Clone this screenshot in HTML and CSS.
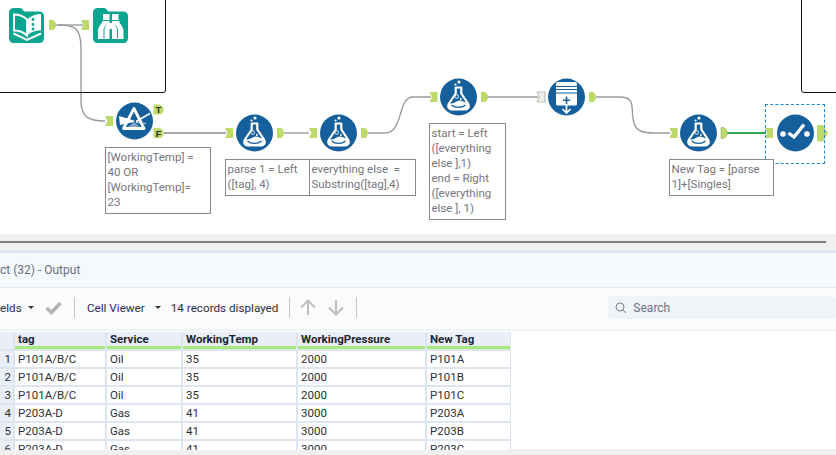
FILE: index.html
```html
<!DOCTYPE html>
<html lang="en">
<head>
<meta charset="utf-8">
<title>Workflow</title>
<link rel="stylesheet" href="styles.css">
</head>
<body>
<section class="canvas">
  <svg class="diagram" width="836" height="234" viewBox="0 0 836 234" xmlns="http://www.w3.org/2000/svg">
    <defs>
      <g id="input"><path d="M-4,-5 H4 V5 H-4 L-1.5,0 Z" fill="#bcd96a"/></g>
      <g id="output"><path d="M-3.5,-5 H0 C2,-5 3.5,-2 3.5,0 C3.5,2 2,5 0,5 H-3.5 Z" fill="#bcd96a"/></g>
      <g id="flask">
        <circle r="18.5" fill="#15609c"/>
        <circle cx="0.5" cy="-15" r="1.6" fill="#fff"/>
        <circle cx="-3" cy="-12.5" r="1.1" fill="#fff"/>
        <path d="M-2.8,-9.5 H2.8 V-3.5 L9.5,6.5 C11.5,10.5 9,12.5 6,12.5 H-6 C-9,12.5 -11.5,10.5 -9.5,6.5 L-2.8,-3.5 Z" fill="none" stroke="#fff" stroke-width="2.2" stroke-linejoin="round"/>
        <path d="M-9.500,6 C-5,8 -2,3.500 1,3.500 C4,3.500 6,6 9.500,5 C11.500,10 9,13 6,13 H-6 C-9,13 -11.500,10 -9.500,6 Z" fill="#fff"/>
        <path d="M-7,8 C-3.500,11.200 3.500,11.200 7,8" fill="none" stroke="#15609c" stroke-width="1.400"/>
        <circle cx="-1.800" cy="-0.500" r="1.800" fill="none" stroke="#fff" stroke-width="0.900"/>
        <circle cx="2.400" cy="2" r="1" fill="#fff"/>
      </g>
    </defs>

    <g fill="none" stroke="#9c9c9c" stroke-width="1.4">
      <path d="M55,25 H83"/>
      <path d="M58,25 C74,25 81,27 81,48 V100 C81,117 88,121 105,121"/>
      <path d="M164,133 H226" stroke="#a8a8a8" stroke-width="2"/>
      <path d="M284,133 H309"/>
      <path d="M368,133 H385 C404,133 397,97 413,97 H431"/>
      <path d="M488,97 H538"/>
      <path d="M596,97 H620 C637,97 630,110 634,123 C636,131 643,133 655,133 H670"/>
      <path d="M727,133 H766" stroke="#36a85c" stroke-width="2.200"/>
    </g>

    <path d="M9,13 Q9,8 14,8 H20 Q22,8 23,10 L24,11.500 H39 Q44,11.500 44,16.500 V38 Q44,43 39,43 H14 Q9,43 9,38 Z" fill="#0aa58f"/>
    <path d="M14,14.500 C19,14.500 24,16.500 27,19.500 V35.500 C24,32.500 19,30.500 14,30.500 Z" fill="none" stroke="#fff" stroke-width="1.800"/>
    <path d="M27,19.500 C30,16.500 35,14 41,14 V30.500 C35,30.500 30,32.500 27,35.500 Z" fill="#fff"/>
    <path d="M13.500,33.500 L27,40 L41,33.500" fill="none" stroke="#fff" stroke-width="2"/>
    <circle cx="33" cy="19.500" r="1.400" fill="#0aa58f"/>
    <circle cx="33" cy="24.500" r="1.400" fill="#0aa58f"/>
    <circle cx="33" cy="29" r="1.400" fill="#0aa58f"/>
    <use href="#output" x="52.500" y="25"/>
    <use href="#input" x="85" y="25"/>
    <path d="M93,13 Q93,8 98,8 H104 Q106,8 107,10 L108,11.500 H123 Q128,11.500 128,16.500 V38 Q128,43 123,43 H98 Q93,43 93,38 Z" fill="#0aa58f"/>
    <path d="M103,14 H109.500 V20 H103 Z M112,14 H118.500 V20 H112 Z" fill="#fff"/>
    <path d="M102.500,21 H109.500 V39 H98 V31 C98,27 101,25 102.500,21 Z M112,21 H119 C120.500,25 123.500,27 123.500,31 V39 H112 Z M109.500,23 H112 V29 H109.500 Z" fill="#fff"/>
    <path d="M104,38.500 V30 C104,28 105,27 106,25.500 M117.500,38.500 V30 C117.500,28 116.500,27 115.500,25.500" fill="none" stroke="#0aa58f" stroke-width="1"/>

    <use href="#input" x="109" y="121"/>
    <circle cx="134.500" cy="121" r="18.500" fill="#15609c"/>
    <path d="M134,122 L127,128 H141 Z" fill="#7fa6c6"/>
    <path d="M134,108.500 L144,128.500 H123.500 Z" fill="none" stroke="#fff" stroke-width="2.800" stroke-linejoin="round"/>
    <path d="M119,116 L134,120.500 V122 L120,125 Z" fill="#fff"/>
    <path d="M136,121.500 L150,113.500" stroke="#fff" stroke-width="1.800"/>
    <path d="M136,122.500 L146,123.500" stroke="#c8d8e6" stroke-width="1"/>
    <path d="M153.500,104.500 H159 C162,104.500 163.500,107.500 163.500,109.500 C163.500,112.500 161.500,114.500 159,114.500 H153.500 Z" fill="#bcd96a"/>
    <path d="M153.500,128 H159 C162,128 163.500,131 163.500,133 C163.500,136 161.500,138 159,138 H153.500 Z" fill="#bcd96a"/>
    <text class="anchor-label" x="158.500" y="113">T</text>
    <text class="anchor-label" x="158.500" y="136.500">F</text>

    <use href="#input" x="229" y="133"/>
    <use href="#flask" x="254.500" y="133"/>
    <use href="#output" x="280.500" y="133"/>
    <use href="#input" x="313" y="133"/>
    <use href="#flask" x="338.500" y="133"/>
    <use href="#output" x="364.500" y="133"/>
    <use href="#input" x="433.500" y="97"/>
    <use href="#flask" x="458.500" y="97"/>
    <use href="#output" x="484.500" y="97"/>

    <path d="M537,92 H545 V102 H537 L539.500,97 Z" fill="#efefe8" stroke="#aaa" stroke-width="0.800"/>
    <circle cx="566.500" cy="97" r="18.500" fill="#15609c"/>
    <path d="M557.500,82 H575.500 Q577,82 577,84 V104 Q577,105.500 575.500,105.500 H557.500 Q556,105.500 556,104 V84 Q556,82 557.500,82 Z" fill="#fff"/>
    <path d="M556,86.500 H577 M556,89.500 H577 M556,93 H577" stroke="#15609c" stroke-width="1.200"/>
    <path d="M566.500,96.500 V104 M563,100.200 H570" stroke="#15609c" stroke-width="1.600"/>
    <path d="M566.500,105 V113 M562.500,109 L566.500,113 L570.500,109" fill="none" stroke="#fff" stroke-width="1.700"/>
    <use href="#output" x="592.500" y="97"/>

    <use href="#input" x="673.500" y="133"/>
    <use href="#flask" x="698.500" y="133"/>
    <path d="M721,127.500 H723 C725.500,127.500 727.500,131 727.500,133 C727.500,135 725.500,138.500 723,138.500 H721 Z" fill="#bcd96a" stroke="#8c9c6a" stroke-width="0.500"/>

    <use href="#input" x="769" y="133"/>
    <circle cx="795.500" cy="133" r="18.500" fill="#15609c"/>
    <circle cx="783" cy="134" r="2.800" fill="#fff"/>
    <circle cx="807" cy="134" r="2.800" fill="#fff"/>
    <path d="M788.500,133 L794,137 L804,124.500" fill="none" stroke="#fff" stroke-width="3.400"/>
    <path d="M817,125 H823 L828,133 L823,141.500 H817 Z" fill="#bcd96a"/>
  </svg>

  <div class="frame frame-left"></div>
  <div class="frame frame-right"></div>
  <div class="selection"></div>

  <div class="note note-filter">[WorkingTemp] =<br>40 OR<br>[WorkingTemp]=<br>23</div>
  <div class="note note-parse">parse 1 = Left<br>([tag], 4)</div>
  <div class="note note-else">everything else&nbsp; =<br>Substring([tag],4)</div>
  <div class="note note-start">start = Left<br>([everything<br>else ],1)<br>end = Right<br>([everything<br>else ], 1)</div>
  <div class="note note-new">New Tag = [parse<br>1]+[Singles]</div>
</section>

<div class="scroll-strip"><div class="scroll-line"></div></div>

<section class="results">
  <header class="results-title">ct (32) - Output</header>
  <div class="toolbar">
    <span class="tool-text">elds</span>
    <span class="caret caret-fields"></span>
    <svg class="check" width="17" height="14" viewBox="0 0 17 14" xmlns="http://www.w3.org/2000/svg"><path d="M1.500,7 L6.500,11.500 L15.500,2" fill="none" stroke="#b4b4b4" stroke-width="3.600"/></svg>
    <span class="sep sep-a"></span>
    <span class="tool-text">Cell Viewer</span>
    <span class="caret caret-cell"></span>
    <span class="tool-text records">14 records displayed</span>
    <span class="sep sep-b"></span>
    <svg class="arrow" width="16" height="17" viewBox="0 0 16 17" xmlns="http://www.w3.org/2000/svg"><path d="M8,16 V2 M1,8.500 L8,1.500 L15,8.500" fill="none" stroke="#bdbdbd" stroke-width="2"/></svg>
    <svg class="arrow arrow-down" width="16" height="17" viewBox="0 0 16 17" xmlns="http://www.w3.org/2000/svg"><path d="M8,1 V15 M1,8.500 L8,15.500 L15,8.500" fill="none" stroke="#bdbdbd" stroke-width="2"/></svg>
    <span class="sep sep-c"></span>
    <div class="search">
      <svg width="12" height="12" viewBox="0 0 12 12" xmlns="http://www.w3.org/2000/svg"><circle cx="5" cy="5" r="4" fill="none" stroke="#76819a" stroke-width="1"/><path d="M8,8 L11,11" stroke="#76819a" stroke-width="1"/></svg>
      <span>Search</span>
    </div>
  </div>
  <div class="table-area">
    <div class="grid">
      <div class="corner"></div><div class="head">tag</div><div class="head">Service</div><div class="head">WorkingTemp</div><div class="head">WorkingPressure</div><div class="head">New Tag</div>
      <div class="num">1</div><div class="cell">P101A/B/C</div><div class="cell">Oil</div><div class="cell">35</div><div class="cell">2000</div><div class="cell">P101A</div>
      <div class="num">2</div><div class="cell">P101A/B/C</div><div class="cell">Oil</div><div class="cell">35</div><div class="cell">2000</div><div class="cell">P101B</div>
      <div class="num">3</div><div class="cell">P101A/B/C</div><div class="cell">Oil</div><div class="cell">35</div><div class="cell">2000</div><div class="cell">P101C</div>
      <div class="num">4</div><div class="cell">P203A-D</div><div class="cell">Gas</div><div class="cell">41</div><div class="cell">3000</div><div class="cell">P203A</div>
      <div class="num">5</div><div class="cell">P203A-D</div><div class="cell">Gas</div><div class="cell">41</div><div class="cell">3000</div><div class="cell">P203B</div>
      <div class="num">6</div><div class="cell">P203A-D</div><div class="cell">Gas</div><div class="cell">41</div><div class="cell">3000</div><div class="cell">P203C</div>
    </div>
  </div>
</section>
<div class="bottom-strip"></div>
</body>
</html>
```

FILE: styles.css
```css
* { box-sizing: border-box; }

html, body {
  margin: 0;
  height: 100%;
  overflow: hidden;
  background: #fff;
  font-family: Roboto, "Open Sans", sans-serif;
}

.canvas {
  position: relative;
  height: 234px;
  background: #fff;
  overflow: hidden;
}

.diagram { position: absolute; left: 0; top: 0; display: block; }

.anchor-label {
  font: bold 9px "Liberation Sans", sans-serif;
  fill: #2a2a2a;
  text-anchor: middle;
}

.frame {
  position: absolute;
  top: -4px;
  height: 97px;
  border: 1px solid #111;
}
.frame-left { left: -4px; width: 170px; border-bottom-right-radius: 3px; }
.frame-right { left: 801px; width: 50px; border-bottom-left-radius: 3px; }

.selection {
  position: absolute;
  left: 765px;
  top: 104px;
  width: 60px;
  height: 60px;
  border: 1px dashed #1e88d8;
}

.note {
  position: absolute;
  padding: 2px 0 0 1.500px;
  border: 1px solid #8a8a8a;
  background: #fff;
  color: #76767c;
  font-size: 11.500px;
  line-height: 15.100px;
  white-space: nowrap;
}
.note-filter { left: 105px; top: 147px; width: 106px; height: 67px; }
.note-parse { left: 225px; top: 159px; width: 85px; height: 37px; }
.note-else { left: 309px; top: 159px; width: 107px; height: 37px; }
.note-start { left: 429px; top: 123px; width: 77px; height: 97px; }
.note-new { left: 669px; top: 159px; width: 105px; height: 37px; }

.scroll-strip {
  height: 16px;
  padding-top: 7px;
  background: #f0f0f0;
}
.scroll-line { width: 826px; height: 2px; background: #808080; }

.results { height: 199px; background: #fff; }

.results-title {
  height: 38px;
  padding-top: 9px;
  border-top: 3px solid #dfe6f2;
  border-bottom: 1px solid #e3e8f0;
  background: #f5f8fc;
  color: #67707f;
  font-size: 12px;
  line-height: 16px;
  white-space: nowrap;
}

.toolbar {
  display: flex;
  align-items: center;
  height: 43px;
  padding-bottom: 2px;
  border-bottom: 2px solid #f0f2f6;
  background: #f9fbfd;
  color: #2c3240;
  font-size: 11.700px;
}

.tool-text { white-space: nowrap; }
.tool-text:first-child { width: 19px; }

.caret {
  width: 0;
  height: 0;
  border-left: 3px solid transparent;
  border-right: 3px solid transparent;
  border-top: 3px solid #333;
}
.caret-fields { margin-left: 9px; }
.caret-cell { margin-left: 10px; }

.check { margin-left: 11px; }

.sep { width: 1px; height: 21px; background: #c4c6ca; }
.sep-a { margin: 0 12px; }
.sep-b { margin: 0 10px 0 11px; }
.sep-c { margin-left: 12px; }

.records { margin-left: 10px; }

.arrow-down { margin-left: 12px; }

.search {
  display: flex;
  align-items: center;
  gap: 6px;
  width: 228px;
  height: 23px;
  margin-left: 251px;
  padding-left: 7px;
  border-radius: 4px;
  background: #f0f3f8;
  color: #6a7384;
  font-size: 12px;
}

.table-area {
  height: 118px;
  margin-top: 1px;
  overflow: hidden;
  background: #fff;
}

.grid {
  display: grid;
  grid-template-columns: 13px 90px 74px 113px 127px 83px;
  grid-template-rows: 17px;
  grid-auto-rows: 16px;
  gap: 2px;
  width: 511px;
  padding-right: 1px;
  background: #dde5f1;
  color: #2b2f36;
  font-size: 11.500px;
  line-height: 17px;
}

.corner, .head, .num { background: #e9eef8; }

.head {
  padding-left: 3px;
  border-bottom: 3px solid #a5ea7a;
  color: #1f2530;
  font-weight: 700;
  line-height: 15px;
  overflow: hidden;
  white-space: nowrap;
}
.corner { height: 17px; }

.num { padding-right: 2px; text-align: right; }

.cell {
  padding-left: 3px;
  background: #fff;
  white-space: nowrap;
}

.bottom-strip { height: 6px; background: #f0f0f0; }
```
